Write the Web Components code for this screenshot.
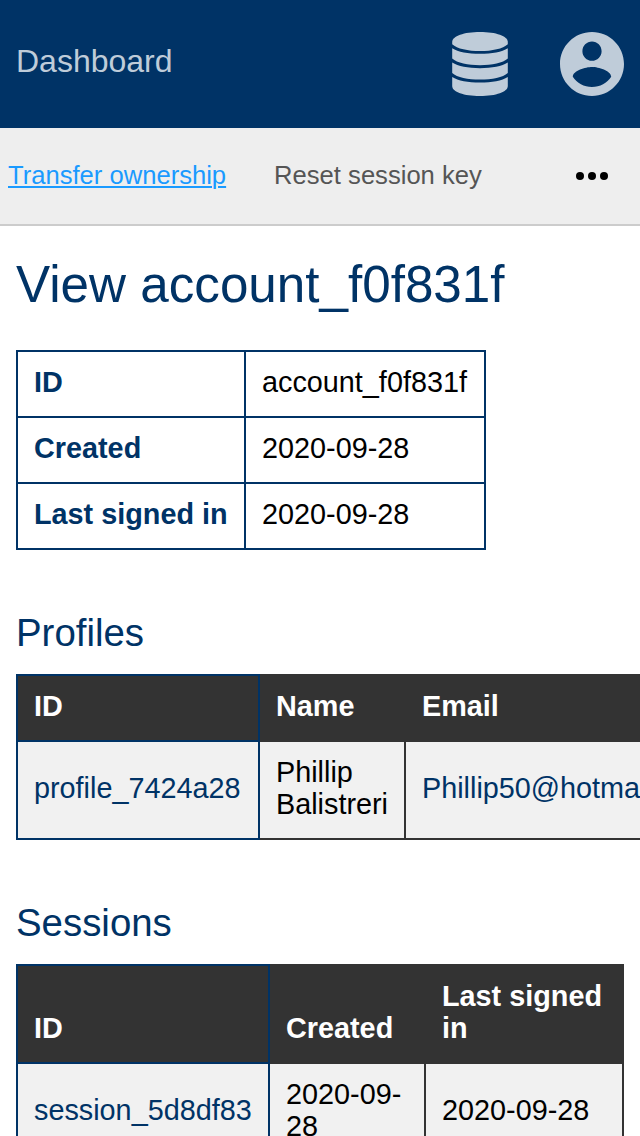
<!DOCTYPE html>
<html lang="en">
<head>
<meta charset="utf-8">
<title>Dashboard</title>
<style>
html,body{margin:0;height:1136px;overflow:hidden;background:#fff}
body{font-family:"Liberation Sans",Arial,sans-serif;font-size:28.8px;line-height:32px;color:#000}
</style>
</head>
<body>
<account-page></account-page>
<script>
const define = (name, html) => {
  const template = document.createElement('template');
  template.innerHTML = html;
  customElements.define(name, class extends HTMLElement {
    constructor() {
      super();
      this.attachShadow({mode: 'open'}).append(template.content.cloneNode(true));
    }
  });
};

define('top-bar', `
<style>
:host{display:flex;align-items:center;box-sizing:border-box;height:128px;padding:0 16px;background:#036;color:#bfccd9}
.brand{flex:1;font-size:32px;line-height:36px;padding-bottom:6px}
svg{display:block;width:64px;height:64px;fill:currentColor}
.icons{display:flex;gap:48px}
</style>
<div class="brand"><slot></slot></div>
<div class="icons">
<svg viewBox="0 0 64 64"><path d="M4.2 10C4.2 4 16 0 32 0s27.8 4 27.8 10v2.2C55 16.8 44 19 32 19S9 16.8 4.2 12.2z"/><path id="a" d="M4.2 16.2C10 20 20 21.8 32 21.8S54 20 59.8 16.2v10.4C55 31 44 33.2 32 33.2S9 31 4.2 26.6z"/><path d="M4.2 30.6C10 34.4 20 36.2 32 36.2s22-1.8 27.8-5.6V41C55 45.4 44 47.6 32 47.6S9 45.4 4.2 41z"/><path d="M4.2 45C10 48.8 20 50.6 32 50.6s22-1.8 27.8-5.6v9C59.8 60 48 64 32 64S4.2 60 4.2 54z"/></svg>
<svg viewBox="2 2 20 20"><path d="M12 2C6.48 2 2 6.48 2 12s4.48 10 10 10 10-4.48 10-10S17.52 2 12 2zm0 3c1.66 0 3 1.34 3 3s-1.34 3-3 3-3-1.34-3-3 1.34-3 3-3zm0 14.2c-2.5 0-4.71-1.28-6-3.22.03-1.99 4-3.08 6-3.08 1.99 0 5.97 1.09 6 3.08-1.29 1.94-3.5 3.22-6 3.22z"/></svg>
</div>`);

define('action-bar', `
<style>
:host{display:flex;align-items:center;gap:48px;box-sizing:border-box;height:98px;padding:0 32px 0 8px;background:#eee;border-bottom:2px solid #ccc;font-size:25.6px;line-height:30px;color:#555}
svg{display:block;width:32px;height:8px;margin-left:auto}
</style>
<slot></slot>
<svg viewBox="0 0 32 8"><circle cx="4" cy="4" r="4"/><circle cx="16" cy="4" r="4"/><circle cx="28" cy="4" r="4"/></svg>`);

define('action-link', `
<style>
:host{display:block;white-space:nowrap;padding-bottom:2px}
:host([active]){color:#1a9aff;text-decoration:underline 2px;text-underline-offset:2px}
</style><slot></slot>`);

define('data-grid', `
<style>
:host{display:grid;width:max-content;grid-template-columns:var(--cols);padding:2px 0 0 2px}
</style><slot></slot>`);

define('data-cell', `
<style>
:host{display:flex;align-items:center;box-sizing:border-box;margin:-2px 0 0 -2px;padding:14px 16px 18px;border:2px solid #333;background:#f1f1f1;position:relative}
:host([plain]){border-color:#036;background:#fff}
:host([head]){background:#333;color:#fff;font-weight:bold;align-items:flex-end}
:host([first]){border-color:#036;z-index:1}
:host([label]){color:#036;font-weight:bold}
:host([link]){color:#036}
</style><span><slot></slot></span>`);

define('page-section', `
<style>
:host{display:block;padding-top:60px}
h2{margin:0 0 18px;font-size:38.4px;line-height:46px;font-weight:normal;color:#036}
</style>
<h2><slot name="title"></slot></h2><slot></slot>`);

define('account-page', `
<style>
:host{display:block;width:640px;height:1136px;overflow:hidden}
main{padding:0 16px}
h1{margin:0;padding:30px 0 36px;font-size:51.2px;line-height:58px;font-weight:normal;color:#036}
.summary{--cols:228px 240px}
.profiles{--cols:242px 146px 360px}
.sessions{--cols:252px 156px 198px}
</style>
<top-bar>Dashboard</top-bar>
<action-bar><action-link active>Transfer ownership</action-link><action-link>Reset session key</action-link></action-bar>
<main>
<h1>View account_f0f831f</h1>
<data-grid class="summary">
<data-cell plain label>ID</data-cell><data-cell plain>account_f0f831f</data-cell>
<data-cell plain label>Created</data-cell><data-cell plain>2020-09-28</data-cell>
<data-cell plain label>Last signed in</data-cell><data-cell plain>2020-09-28</data-cell>
</data-grid>
<page-section><span slot="title">Profiles</span>
<data-grid class="profiles">
<data-cell head first>ID</data-cell><data-cell head>Name</data-cell><data-cell head>Email</data-cell>
<data-cell first link>profile_7424a28</data-cell><data-cell>Phillip Balistreri</data-cell><data-cell link>Phillip50@hotmail.com</data-cell>
</data-grid></page-section>
<page-section><span slot="title">Sessions</span>
<data-grid class="sessions">
<data-cell head first>ID</data-cell><data-cell head>Created</data-cell><data-cell head>Last signed in</data-cell>
<data-cell first link>session_5d8df83</data-cell><data-cell>2020-09-<br>28</data-cell><data-cell>2020-09-28</data-cell>
</data-grid></page-section>
</main>`);
</script>
</body>
</html>
